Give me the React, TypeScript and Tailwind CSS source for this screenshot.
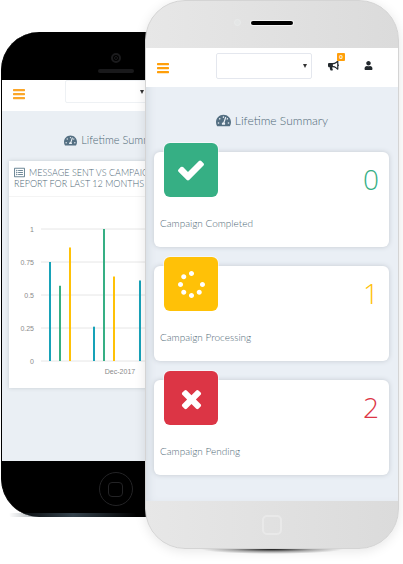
import React from "react";
import { FaBullhorn, FaRegListAlt, FaSpinner, FaTachometerAlt, FaUser } from "react-icons/fa";

const bars = [
  { x: 40, value: 0.75, color: "#17a2b8" },
  { x: 50, value: 0.57, color: "#36af84" },
  { x: 60, value: 0.86, color: "#ffc107" },
  { x: 84, value: 0.26, color: "#17a2b8" },
  { x: 94, value: 1, color: "#36af84" },
  { x: 104, value: 0.64, color: "#ffc107" },
  { x: 130, value: 0.61, color: "#17a2b8" },
];

const ticks = [1, 0.75, 0.5, 0.25, 0];
const plotHeight = 132;
const yOf = (value: number) => 32 + (1 - value) * plotHeight;

function MenuIcon({ size }: { size: number }) {
  return (
    <svg width={size} height={size} viewBox="0 0 12 12" fill="currentColor">
      <rect y="1" width="12" height="2.2" rx="0.6" />
      <rect y="5" width="12" height="2.2" rx="0.6" />
      <rect y="9" width="12" height="2.2" rx="0.6" />
    </svg>
  );
}

function CheckIcon({ size }: { size: number }) {
  return (
    <svg width={size} height={size} viewBox="0 0 1792 1792" fill="currentColor">
      <path d="M1671 566q0 40-28 68l-724 724-136 136q-28 28-68 28t-68-28l-136-136-362-362q-28-28-28-68t28-68l136-136q28-28 68-28t68 28l294 295 656-657q28-28 68-28t68 28l136 136q28 28 28 68z" />
    </svg>
  );
}

function CrossIcon({ size }: { size: number }) {
  return (
    <svg width={size} height={size} viewBox="0 0 1792 1792" fill="currentColor">
      <path d="M1490 1322q0 40-28 68l-136 136q-28 28-68 28t-68-28l-294-294-294 294q-28 28-68 28t-68-28l-136-136q-28-28-28-68t28-68l294-294-294-294q-28-28-28-68t28-68l136-136q28-28 68-28t68 28l294 294 294-294q28-28 68-28t68 28l136 136q28 28 28 68t-28 68l-294 294 294 294q28 28 28 68z" />
    </svg>
  );
}

function Chart() {
  return (
    <svg className="block w-full" height="190" role="img" aria-label="Messages sent by month">
      {ticks.map((t) => (
        <g key={t}>
          <line x1="32" x2="200" y1={yOf(t)} y2={yOf(t)} stroke="#e6e6e6" strokeWidth="1" />
          <text x="25" y={yOf(t) + 3} textAnchor="end" fontSize="7" fill="#8a8a8a">
            {t}
          </text>
        </g>
      ))}
      {bars.map((b) => (
        <rect key={b.x} x={b.x} y={yOf(b.value)} width="2" height={b.value * plotHeight} fill={b.color} />
      ))}
      <text x="111" y="177" textAnchor="middle" fontSize="7" fill="#8a8a8a">
        Dec-2017
      </text>
    </svg>
  );
}

function Picker({ label, className }: { label: string; className: string }) {
  return (
    <div className={"relative rounded-xs border bg-white " + className}>
      <select aria-label={label} className="block h-full w-full appearance-none bg-transparent outline-none">
        <option value="" />
      </select>
      <svg viewBox="0 0 4 4" className="pointer-events-none absolute top-1/2 right-1 size-1 -translate-y-1/2">
        <path d="M0 0h4L2 4z" fill="#333" />
      </svg>
    </div>
  );
}

function BackPhone() {
  return (
    <section className="mt-8 -mr-[84px] w-[228px] shrink-0">
      <div className="overflow-hidden rounded-[38px] border-l border-black bg-black">
        <div className="flex h-12 flex-col items-center pt-[21px]">
          <span className="flex size-[10px] items-center justify-center rounded-full border-2 border-[#1b1b1d]">
            <span className="size-1 rounded-full border border-[#1b1b1d]" />
          </span>
          <span className="mt-[6px] h-1 w-9 rounded-full bg-[#19191b]" />
        </div>
        <div className="h-[381px] bg-[#eaeff4]">
          <header className="flex h-[31px] items-start bg-white pl-[11px]">
            <button type="button" aria-label="Menu" className="mt-2 text-[#fba629]">
              <MenuIcon size={12} />
            </button>
            <Picker label="Account" className="ml-10 h-[23px] w-[84px] border-[#eef1f4]" />
          </header>
          <h2 className="flex h-[50px] items-center justify-center gap-1 pt-[9px] text-[11px] font-light text-[#4f6977]">
            <FaTachometerAlt size={13} className="text-[#546f82]" />
            Lifetime Summary
          </h2>
          <article className="mx-[7px] h-[227px] bg-white shadow-[0_0_4px_#c6cdd3]">
            <h3 className="h-9 border-b border-[#f4f4f4] px-[5px] pt-[6px] text-[9px] leading-[11px] font-light whitespace-nowrap text-[#4f6977]">
              <FaRegListAlt size={11} className="mr-1 inline align-[-2px] text-[#6f8998]" />
              MESSAGE SENT VS CAMPAIGN
              <br />
              REPORT FOR LAST 12 MONTHS
            </h3>
            <Chart />
          </article>
        </div>
        <div className="flex h-14 items-center justify-center">
          <button
            type="button"
            aria-label="Home"
            className="flex size-[34px] items-center justify-center rounded-full border border-[#232325]"
          >
            <span className="size-[15px] rounded-sm border border-[#232325]" />
          </button>
        </div>
      </div>
      <div className="-mt-1 ml-2 h-1 w-32 rounded-full bg-linear-to-r from-transparent via-[#34424c] to-transparent" />
    </section>
  );
}

const cards = [
  { label: "Campaign Completed", value: 0, Icon: CheckIcon, size: 30, tile: "bg-[#36af84]", text: "text-[#36af84]" },
  { label: "Campaign Processing", value: 1, Icon: FaSpinner, size: 27, tile: "bg-[#ffc107]", text: "text-[#ffc107]" },
  { label: "Campaign Pending", value: 2, Icon: CrossIcon, size: 29, tile: "bg-[#dc3545]", text: "text-[#dc3545]" },
];

function FrontPhone() {
  return (
    <section className="relative z-10 min-w-0 flex-1">
      <div className="overflow-hidden rounded-[40px] border border-[#d4d4d4] bg-linear-to-r from-[#e7e7e7] to-[#dbdbdb] shadow-[0_2px_12px_rgba(0,0,0,0.10)]">
        <div className="flex h-[47px] items-center pb-1 pl-[88px]">
          <span className="size-[7px] rounded-full border border-[#e9ebeb] bg-[#e4e6e6]" />
          <span className="ml-[10px] h-1 w-[42px] rounded-full bg-black ring-1 ring-[#f4f4f4]" />
        </div>
        <div className="bg-[#eaeff5] shadow-[inset_6px_0_8px_-4px_#d5dbe2]">
          <header className="flex h-[39px] items-center bg-white pr-[25px] pb-1 pl-[11px]">
            <button type="button" aria-label="Menu" className="pt-1 text-[#ff9f0a]">
              <MenuIcon size={12} />
            </button>
            <Picker label="Account" className="ml-auto h-[26px] w-[96px] border-[#e4e7ee]" />
            <button type="button" aria-label="Announcements" className="relative ml-4 text-[#22282d]">
              <FaBullhorn size={11} />
              <span className="absolute -top-[7px] -right-[6px] flex size-2 items-center justify-center rounded-[1px] bg-[#ff9f0a] text-[6px] leading-none font-bold text-white">
                0
              </span>
            </button>
            <button type="button" aria-label="Profile" className="ml-[25px] text-[#22282d]">
              <FaUser size={9} />
            </button>
          </header>
          <h1 className="flex h-[65px] items-center justify-center gap-1 pt-0.5 text-[12px] font-light text-[#4f6977]">
            <FaTachometerAlt size={15} className="text-[#546f82]" />
            Lifetime Summary
          </h1>
          <ul className="flex flex-col gap-[19px] pr-[9px] pb-[26px] pl-2">
            {cards.map(({ label, value, Icon, size, tile, text }) => (
              <li key={label} className="h-[95px] rounded-[6px] bg-white px-[6px] shadow-[0_0_5px_#c3c9d0]">
                <div className="flex justify-between pr-1 pl-1">
                  <span
                    className={
                      "-mt-[9px] flex size-[54px] items-center justify-center rounded-[6px] text-white ring-1 ring-white/50 " + tile
                    }
                  >
                    <Icon size={size} />
                  </span>
                  <strong className={"pt-[11px] font-['Open_Sans','Noto_Sans',sans-serif] text-[28px] leading-8 font-light " + text}>
                    {value}
                  </strong>
                </div>
                <p className="mt-4 text-[10px] leading-5 font-light text-[#4f6977]">{label}</p>
              </li>
            ))}
          </ul>
        </div>
        <div className="flex h-[47px] items-center justify-center">
          <button type="button" aria-label="Home" className="size-5 rounded-[5px] border-2 border-[#e9e9e9]" />
        </div>
      </div>
      <div className="mx-auto h-[5px] w-36 bg-[radial-gradient(ellipse_at_top,#111_0%,#77777799_40%,transparent_70%)]" />
    </section>
  );
}

export default function App() {
  return (
    <main className="flex min-h-screen items-start overflow-hidden bg-white pr-1 pl-px font-['Lato','Noto_Sans',sans-serif] [&_svg_text]:font-['Liberation_Sans',sans-serif]">
      <BackPhone />
      <FrontPhone />
    </main>
  );
}
